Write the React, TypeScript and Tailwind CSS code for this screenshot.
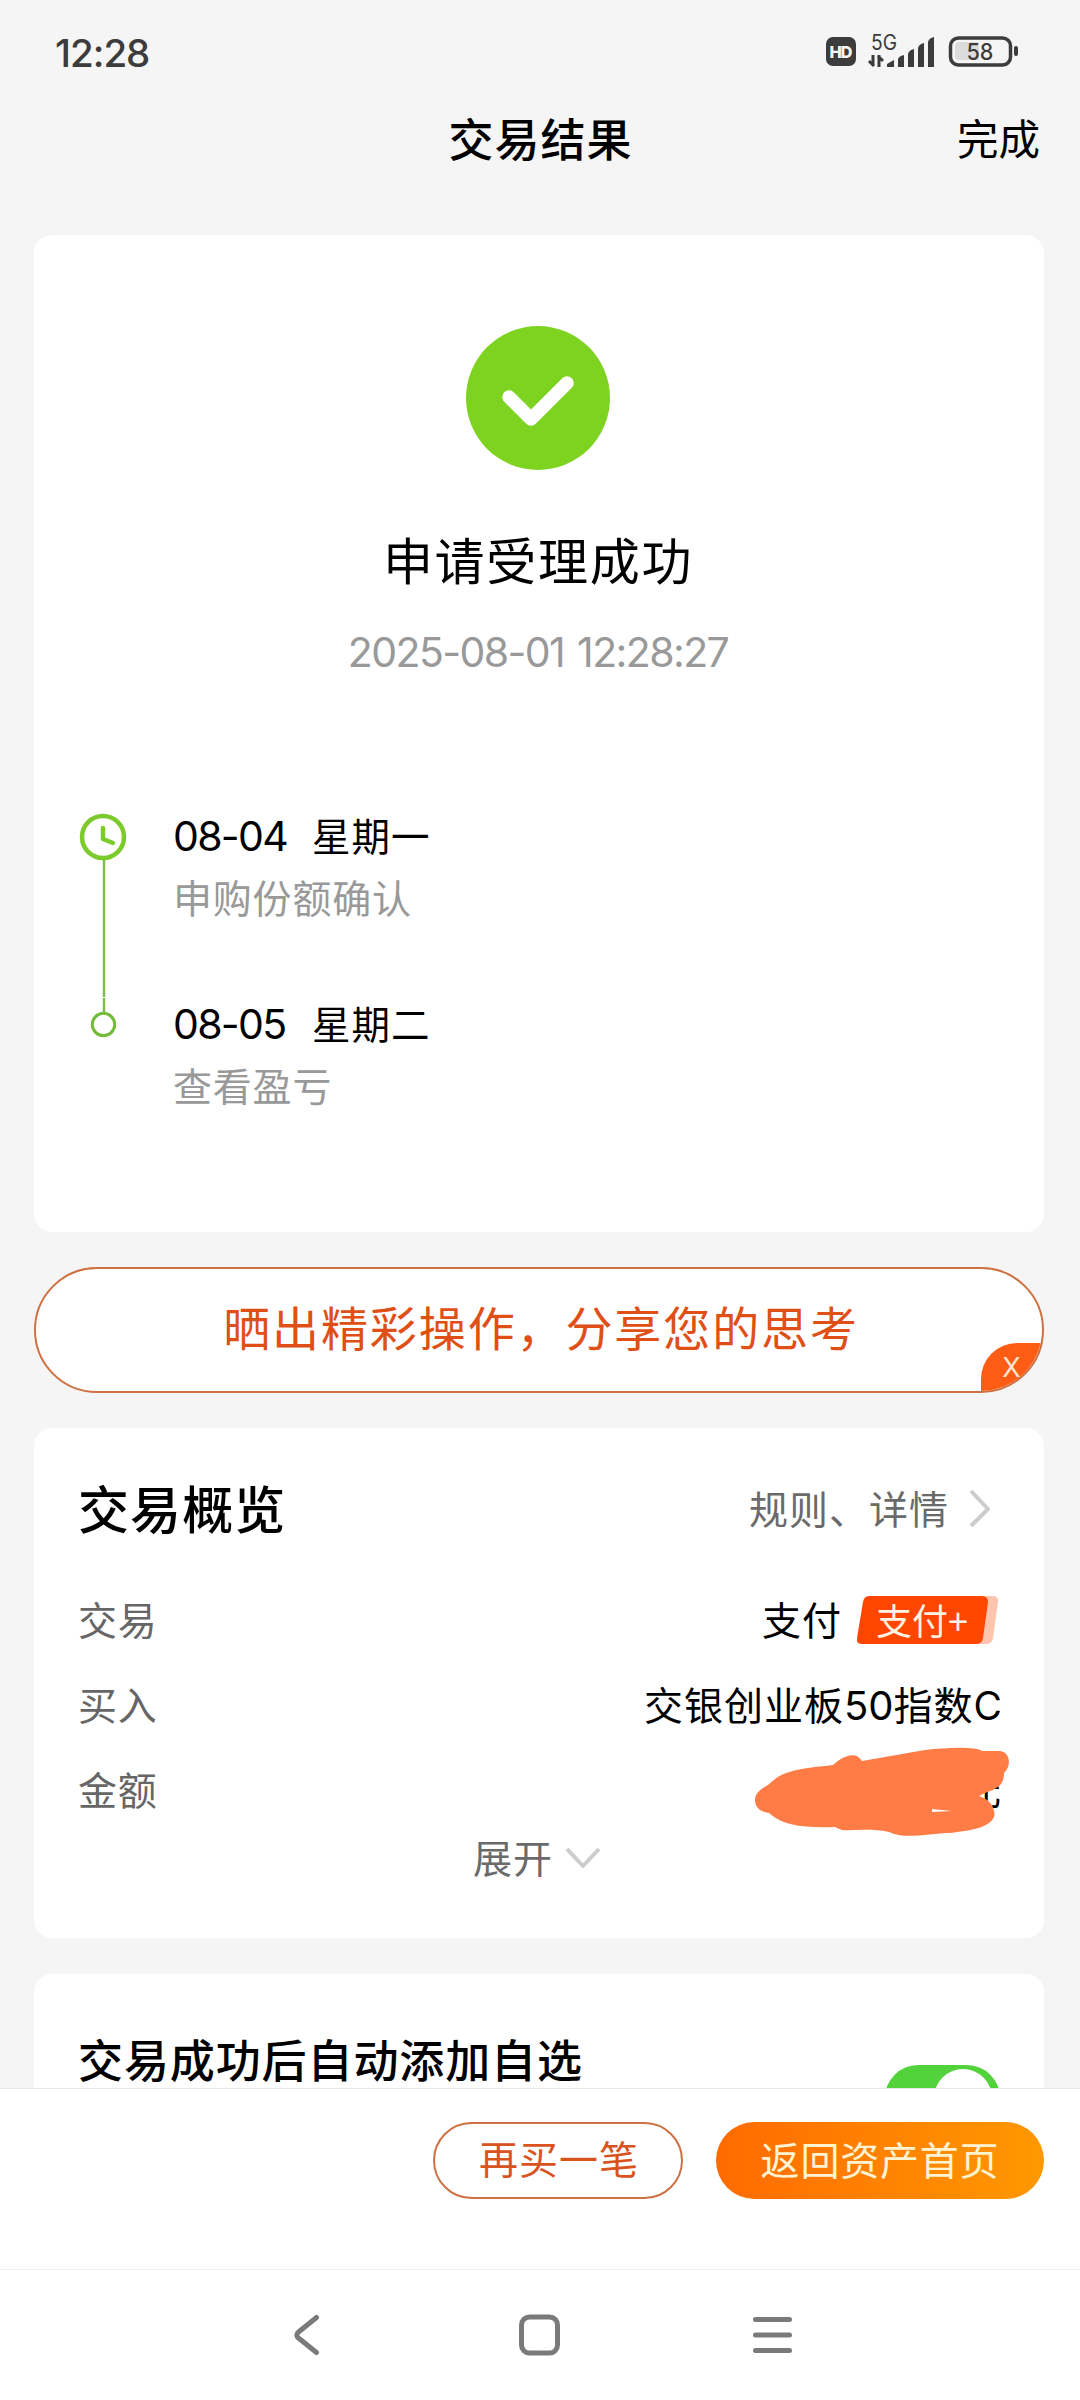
import type { ReactNode } from "react";

const timeline = [
  { date: "08-04", day: "星期一", note: "申购份额确认" },
  { date: "08-05", day: "星期二", note: "查看盈亏" },
];

function StatusBar() {
  return (
    <div className="flex h-[100px] items-center justify-between pl-[55px] pr-[62px] text-[#3c3c3c]">
      <span className="pt-[6px] font-[Inter] text-[38.500px] font-medium leading-[40px] tracking-[-1px]">12:28</span>
      <svg width="194" height="40" viewBox="0 0 194 40" className="mt-[3px]">
        <rect x="2" y="5" width="30" height="29" rx="7" fill="#3c3c3c" />
        <text x="17" y="25.500" textAnchor="middle" fontSize="16.500" fontWeight="800" textLength="23" fill="#f5f5f5" fontFamily="Inter">HD</text>
        <text x="47" y="18" fontSize="21" fill="#3c3c3c" textLength="26" lengthAdjust="spacingAndGlyphs" fontFamily="Inter">5G</text>
        <path d="M49 23v11M50 34l-5-5M55 35V23M54 24l5 5" stroke="#3c3c3c" strokeWidth="3" fill="none" />
        <path d="M63 32l7-4v7h-7zM74 27q1-3 6-4v12h-6zM84 22q1-4 6-5v18h-6zM94 16q1-4 6-5v24h-6zM104 10q1-4 6-5v30h-6z" fill="#3c3c3c" />
        <rect x="126.5" y="6" width="60" height="27" rx="8" fill="none" stroke="#3c3c3c" strokeWidth="3.5" />
        <path d="M135 10h20v18h-20q-4 0-4-4V14q0-4 4-4z" fill="#dcdcdc" />
        <rect x="190" y="14" width="4" height="10" rx="2" fill="#3c3c3c" />
        <text x="156" y="28" textAnchor="middle" fontSize="23" fontWeight="500" textLength="27" lengthAdjust="spacingAndGlyphs" fill="#3c3c3c" fontFamily="Inter">58</text>
      </svg>
    </div>
  );
}

function Row({ label, children }: { label: string; children: ReactNode }) {
  return (
    <div className="flex h-[85px] items-center justify-between">
      <span className="text-[39px] tracking-[0.800px] text-[#666]">{label}</span>
      <div className="flex items-center text-[39px] tracking-[1px] text-black">{children}</div>
    </div>
  );
}

/** Brush stroke that hides the amount. */
function Scribble() {
  return (
    <svg
      className="absolute right-[-8px] top-1/2 -mt-[42px]"
      width="257"
      height="90"
      viewBox="753 1747 257 90"
    >
      <path
        fill="#ff7c47"
        fillRule="evenodd"
        d="M755 1800C755 1793 762 1788 768 1785C783 1770 798 1769 833 1765C840 1758 855 1749 862 1761L925 1750C945 1748 974 1746 982 1751H1000C1010 1752 1012 1766 1004 1773C1004 1790 991 1789 979 1796C992 1800 996 1811 994 1817C989 1827 975 1830 950 1833C930 1833 905 1840 889 1832C870 1828 855 1831 842 1830C837 1828 835 1827 835 1827C805 1828 783 1826 769 1813C760 1812 755 1807 755 1800ZM932 1809V1812L952 1811Z"
      />
    </svg>
  );
}

function Toggle() {
  return (
    <span className="mt-[32px] flex h-[66px] w-[115px] items-center justify-end rounded-full bg-[#52d33c] pr-[8px]">
      <span className="size-[58px] rounded-full bg-white" />
    </span>
  );
}

function NavBar() {
  return (
    <nav className="flex grow justify-center border-t border-[#efefef] bg-white pl-[5px] pt-[44px]">
      <svg width="500" height="42" viewBox="293 2314 500 42" fill="none" stroke="#7a7a7a" strokeWidth="5" strokeLinecap="round" strokeLinejoin="round">
        <path d="M316.500 2317.500L298.500 2332Q295 2335 298.500 2338L316.500 2352.500" />
        <rect x="521.500" y="2317" width="36" height="36" rx="8" />
        <path d="M755.500 2319.500H789.500M755.500 2335H789.500M755.500 2350.500H789.500" />
      </svg>
    </nav>
  );
}

export default function App() {
  return (
    <div
      className="flex h-[2400px] w-[1080px] flex-col overflow-hidden bg-[#f5f5f5] text-black"
      style={{ fontFamily: "'Noto Sans CJK SC', sans-serif" }}
    >
      <StatusBar />
      <header className="grid h-[73px] grid-cols-[1fr_auto_1fr] items-center pl-[41px] pr-[40px] pt-[2px]">
        <span />
        <h1 className="text-[45px] font-medium leading-[60px] tracking-[1px]">交易结果</h1>
        <span className="-mt-px text-right text-[41.500px] leading-[60px]">完成</span>
      </header>

      <main className="flex h-[1915px] flex-col gap-[35px] overflow-hidden pl-[34px] pr-[36px] pt-[62px]">
        <section className="flex h-[997px] shrink-0 flex-col items-center rounded-[18px] bg-white pr-[2px] pt-[91px]">
          <svg width="144" height="144" viewBox="0 0 144 144" fill="none">
            <circle cx="72" cy="72" r="72" fill="#7ed321" />
            <path d="M43 71L65 93L101 57" stroke="white" strokeWidth="13.500" strokeLinecap="round" strokeLinejoin="round" />
          </svg>
          <h2 className="mt-[51px] text-[50px] leading-[74px] tracking-[1.700px]">申请受理成功</h2>
          <p className="mt-[27px] font-[Inter] text-[41px] leading-[60px] tracking-[-1.600px] text-[#999] [word-spacing:3px]">
            2025-08-01 12:28:27
          </p>

          <div className="mt-[118px] flex w-full pl-[44px]">
            <svg width="50" height="260" viewBox="78 800 50 260" fill="none">
              <path d="M104 860V997M104 998V1012" stroke="#7dbb45" strokeWidth="2.400" />
              <circle cx="103" cy="837" r="21" stroke="#7bcb2c" strokeWidth="4.500" />
              <path d="M103 828V839L113 843" stroke="#7bcb2c" strokeWidth="4.500" strokeLinecap="round" strokeLinejoin="round" />
              <circle cx="103.500" cy="1024.500" r="11.200" stroke="#74bb3a" strokeWidth="3" />
            </svg>
            <ol className="-mt-[3px] flex flex-col pl-[45px]">
              {timeline.map((item) => (
                <li key={item.date} className="h-[188px]">
                  <div className="flex items-center leading-[70px]">
                    <span className="w-[139px] whitespace-nowrap pt-[4px] font-[Inter] text-[41px] tracking-[-1.700px]">{item.date}</span>
                    <span className="text-[38.500px] tracking-[1px]">{item.day}</span>
                  </div>
                  <p className="-mt-[3px] text-[39px] leading-[56px] tracking-[0.800px] text-[#999]">{item.note}</p>
                </li>
              ))}
            </ol>
          </div>
        </section>

        <button className="relative h-[126px] shrink-0 overflow-hidden rounded-full border-2 border-[#cf7040] bg-white pb-[8px] pl-[4px] text-[47px] leading-[60px] tracking-[1.900px] text-[#df4f16]">
          晒出精彩操作，分享您的思考
          <span className="absolute bottom-0 right-0 flex h-[48px] w-[61px] items-center justify-center rounded-tl-[36px] bg-[#fc5c14] font-[Inter] text-[27px] leading-none tracking-normal text-[#ffe6d0]">
            X
          </span>
        </button>

        <section className="h-[510px] shrink-0 rounded-[18px] bg-white pl-[44px] pr-[42px] pt-[38px]">
          <div className="flex h-[82px] items-center justify-between">
            <h2 className="text-[51px] font-medium leading-[82px] tracking-[1.100px]">交易概览</h2>
            <div className="flex items-center gap-[19px] pr-[10px] text-[39px] tracking-[1px] text-[#6a6a6a]">
              规则、详情
              <svg width="24" height="40" viewBox="0 0 24 40" fill="none">
                <path d="M3 4L20 22L3 39" stroke="#ccc" strokeWidth="4" strokeLinejoin="round" />
              </svg>
            </div>
          </div>
          <div className="mt-[28px]">
            <Row label="交易">
              支付
              <span className="relative ml-[15px] mr-[4px] mt-[2px] flex h-[48px] w-[141px] items-center pl-[19px] text-[36px] leading-[48px] tracking-normal text-[#fff3e4]">
                <svg className="absolute inset-0" width="141" height="48" viewBox="0 0 141 48">
                  <path d="M20 0H135Q142 0 141 6L136 42Q135 48 129 48H20Z" fill="#ffc4ae" />
                  <path d="M12 0H125Q131 0 131 6L126 42Q125 48 119 48H5Q-1 48 0 42L6 6Q7 0 12 0Z" fill="#ff4600" />
                </svg>
                <span className="relative -mt-[2px]">支付+</span>
              </span>
            </Row>
            <Row label="买入">
              交银创业板
              <span className="pt-[5px] font-[Inter] text-[40px] tracking-normal">50</span>
              指数
              <span className="pt-[5px] font-[Inter] text-[39px] tracking-normal">C</span>
            </Row>
            <Row label="金额">
              <span className="relative">
                元
                <Scribble />
              </span>
            </Row>
          </div>
          <div className="mt-[3px] flex h-[44px] items-center justify-center gap-[12px] pr-[6px] text-[39px] leading-[44px] tracking-[1px] text-[#6a6a6a]">
            展开
            <svg width="36" height="24" viewBox="0 0 36 24" fill="none" className="mt-[4px]">
              <path d="M2 3L18 20L34 3" stroke="#ccc" strokeWidth="4" strokeLinejoin="round" />
            </svg>
          </div>
        </section>

        <section className="mt-px flex h-[300px] shrink-0 items-start justify-between rounded-[18px] bg-white px-[44px] pt-[59px]">
          <h3 className="text-[45px] font-medium leading-[52px] tracking-[0.900px]">交易成功后自动添加自选</h3>
          <Toggle />
        </section>
      </main>

      <footer className="flex h-[181px] shrink-0 items-start justify-end gap-[33px] border-t border-[#e6e6e6] bg-white pr-[36px] pt-[33px]">
        <button className="h-[77px] w-[250px] rounded-full border-2 border-[#cf7040] pb-[6px] pl-[2px] text-[39px] tracking-[1px] text-[#d9531e]">
          再买一笔
        </button>
        <button className="h-[77px] w-[328px] rounded-full bg-linear-to-r from-[#ff6a00] to-[#ff9800] pb-[5px] text-[39px] tracking-[0.800px] text-[#fff3d2]">
          返回资产首页
        </button>
      </footer>
      <NavBar />
    </div>
  );
}
